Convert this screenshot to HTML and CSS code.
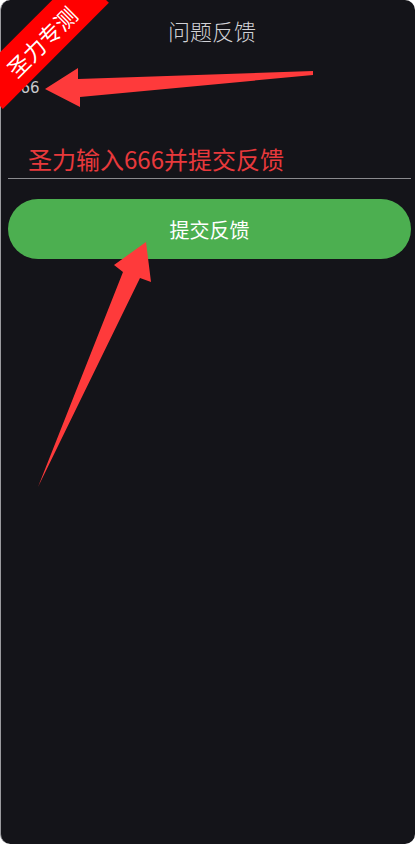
FILE: index.html
```html
<!DOCTYPE html>
<html lang="zh">
<head>
<meta charset="utf-8">
<title>问题反馈</title>
<link rel="stylesheet" href="styles.css">
</head>
<body>
<div class="panel">
  <header class="title">问题反馈</header>
  <div class="value">666</div>
  <div class="field">
    <span class="placeholder">圣力输入666并提交反馈</span>
  </div>
  <button class="submit">提交反馈</button>
</div>
<div class="ribbon"></div>
<div class="ribbon-text">圣力专测</div>
<svg class="arrows" width="415" height="844" viewBox="0 0 415 844">
  <polygon points="313,71 78,79 78,68 45,89 80,107 80,97 313,75" fill="#fe3a3b"/>
  <polygon points="146,242 151,282 140,278 38,487 123,272 114,265" fill="#fe3a3b"/>
</svg>
</body>
</html>
```
FILE: styles.css
```css
html, body {
  margin: 0;
  padding: 0;
  background: #ffffff;
}
body {
  width: 415px;
  height: 844px;
  position: relative;
  overflow: hidden;
  font-family: "Noto Sans CJK SC", "Noto Sans", sans-serif;
}
.panel {
  box-sizing: border-box;
  width: 415px;
  height: 844px;
  background: #141419;
  border-radius: 10px;
  border-left: 1.5px solid #9a9a9e;
  padding: 0 4px 0 7px;
  display: flex;
  flex-direction: column;
}
.title {
  text-align: center;
  color: #d2d2d6;
  font-size: 22px;
  font-weight: 300;
  line-height: 30px;
  padding-top: 15px;
  padding-left: 5px;
}
.value {
  color: #c9c9cd;
  font-family: "DejaVu Sans", sans-serif;
  font-size: 15px;
  line-height: 20px;
  margin-top: 33px;
  padding-left: 3px;
}
.field {
  margin-top: 38px;
  height: 42px;
  border-bottom: 1px solid #8a8a8e;
  padding-left: 20px;
  display: flex;
  align-items: flex-end;
}
.placeholder {
  color: #e8393c;
  font-size: 24px;
  line-height: 34px;
  padding-bottom: 2px;
}
.submit {
  margin-top: 20px;
  height: 60px;
  width: 403px;
  border: none;
  border-radius: 30px;
  background: #4caf50;
  color: #ffffff;
  font-family: "Noto Sans CJK SC", "Noto Sans", sans-serif;
  font-size: 20px;
  padding: 0;
}
.ribbon {
  position: absolute;
  left: -34px;
  top: 20px;
  width: 150px;
  height: 42px;
  background: #ff0000;
  transform: rotate(-45deg);
}
.ribbon-text {
  position: absolute;
  left: -3px;
  top: 30px;
  width: 88px;
  height: 22px;
  color: #ffffff;
  font-size: 22px;
  line-height: 22px;
  text-align: center;
  white-space: nowrap;
  transform: rotate(-45deg);
}
.arrows {
  position: absolute;
  left: 0;
  top: 0;
  pointer-events: none;
}
```
